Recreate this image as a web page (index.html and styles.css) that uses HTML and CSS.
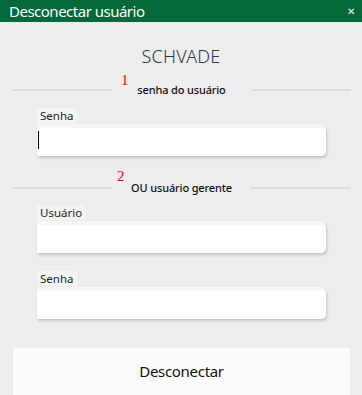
FILE: index.html
```html
<!DOCTYPE html>
<html lang="pt">
<head>
<meta charset="utf-8">
<link rel="stylesheet" href="styles.css">
</head>
<body>
<div class="window">
  <div class="titlebar">
    <span class="title">Desconectar usuário</span>
    <span class="close">&#x2715;</span>
  </div>
  <div class="content">
    <div class="brand">SCHVADE</div>
    <div class="section s1">
      <span class="num">1</span>
      <div class="sep"><span class="line"></span><span class="sep-label">senha do usuário</span><span class="line"></span></div>
    </div>
    <div class="field f1">
      <span class="label">Senha</span>
      <div class="input"><span class="caret"></span></div>
    </div>
    <div class="section s2">
      <span class="num">2</span>
      <div class="sep"><span class="line"></span><span class="sep-label">OU usuário gerente</span><span class="line"></span></div>
    </div>
    <div class="field f2">
      <span class="label">Usuário</span>
      <div class="input"></div>
    </div>
    <div class="field f3">
      <span class="label">Senha</span>
      <div class="input"></div>
    </div>
    <div class="button">Desconectar</div>
  </div>
</div>
</body>
</html>
```
FILE: styles.css
```css
* { box-sizing: border-box; }
html, body { margin: 0; padding: 0; }
body {
  width: 362px;
  height: 395px;
  overflow: hidden;
  background: #ededed;
  font-family: "Noto Sans", "Open Sans", sans-serif;
  color: #1a1a1a;
}
.window { display: flex; flex-direction: column; height: 395px; }
.titlebar {
  height: 22px;
  background: #03693a;
  color: #fff;
  display: flex;
  align-items: center;
  justify-content: space-between;
  padding: 0 7px 1px 9px;
}
.title { font-size: 15px; line-height: 20px; letter-spacing: -0.5px; }
.close { font-size: 10px; line-height: 12px; margin-top: 1px; }
.content { display: flex; flex-direction: column; flex: 1; }
.brand {
  margin-top: 22px;
  text-align: center;
  font-size: 18px;
  line-height: 24px;
  font-weight: 300;
  color: #2e3948;
  letter-spacing: 0.2px;
}
.section { position: relative; }
.s1 { margin-top: 15px; }
.s2 { margin-top: 25px; }
.num {
  position: absolute;
  font-family: "Liberation Serif", serif;
  font-size: 15px;
  line-height: 14px;
  color: #ff0000;
}
.s1 .num { left: 121px; top: -10px; }
.s2 .num { left: 117px; top: -12px; }
.sep {
  display: flex;
  align-items: center;
  padding: 0 11px 0 12px;
  height: 14px;
}
.line { flex: 0 0 100px; height: 2px; background: #dcdcdc; }
.sep-label {
  flex: 1;
  text-align: center;
  font-size: 11px;
  font-weight: 500;
  color: #111;
  line-height: 14px;
  letter-spacing: -0.15px;
}
.field { display: flex; flex-direction: column; align-items: flex-start; padding-left: 37px; padding-right: 36px; }
.f1 { margin-top: 11px; }
.f2 { margin-top: 10px; }
.f3 { margin-top: 18px; }
.label {
  font-size: 11.5px;
  line-height: 15px;
  padding: 0 4px 0 3px;
  background: #f3f3f3;
  color: #1e1e1e;
}
.input {
  position: relative;
  width: 289px;
  height: 32px;
  margin-top: 1px;
  background: linear-gradient(#f6f6f6 0, #f6f6f6 4px, #ffffff 4px);
  border-radius: 1px 7px 5px 1px;
  box-shadow: 1px 2px 3px rgba(0,0,0,0.18);
}
.caret {
  position: absolute;
  left: 1px;
  top: 7px;
  width: 1px;
  height: 18px;
  background: #000;
}
.button {
  margin: 29px 12px 0 13px;
  flex: 1;
  background: #fbfbfb;
  border-radius: 3px 3px 0 0;
  display: flex;
  justify-content: center;
  padding-top: 12px;
  font-size: 15px;
  line-height: 22px;
  letter-spacing: -0.3px;
  color: #111;
}
```
